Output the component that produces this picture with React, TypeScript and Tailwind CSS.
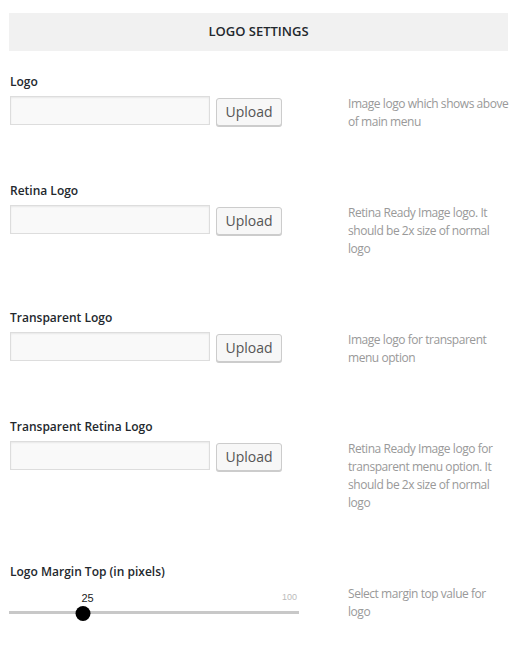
const font = { fontFamily: '"Open Sans", "Noto Sans", sans-serif' };

type Field = { label: string; desc: string[] };

const fields: Field[] = [
  { label: "Logo", desc: ["Image logo which shows above", "of main menu"] },
  {
    label: "Retina Logo",
    desc: ["Retina Ready Image logo. It", "should be 2x size of normal", "logo"],
  },
  {
    label: "Transparent Logo",
    desc: ["Image logo for transparent", "menu option"],
  },
  {
    label: "Transparent Retina Logo",
    desc: [
      "Retina Ready Image logo for",
      "transparent menu option. It",
      "should be 2x size of normal",
      "logo",
    ],
  },
];

function Description({ lines }: { lines: string[] }) {
  return (
    <div className="ml-[48px] text-[12px] leading-[18px] tracking-[-0.45px] text-[#999]">
      {lines.map((l) => (
        <div key={l} className="whitespace-nowrap">
          {l}
        </div>
      ))}
    </div>
  );
}

function UploadField({ field }: { field: Field }) {
  return (
    <div className="pb-[51px]">
      <div className="pl-[10px] text-[12px] font-semibold leading-[18px] text-[#23282d]">
        {field.label}
      </div>
      <div className="mt-[3px] flex items-start">
        <div className="flex w-[300px] shrink-0 items-start pl-[10px] pt-[2px]">
          <div className="h-[29px] w-[200px] border border-[#ddd] bg-[#f9f9f9] shadow-[inset_0_1px_2px_rgba(0,0,0,0.07)]" />
          <button className="ml-[6px] mt-[2px] h-[28px] w-[66px] rounded-[3px] border border-[#ccc] bg-[#f7f7f7] text-[14px] leading-[26px] text-[#555] shadow-[0_1px_0_#ccc]">
            Upload
          </button>
        </div>
        <div className="pt-[1px]">
          <Description lines={field.desc} />
        </div>
      </div>
    </div>
  );
}

function MarginSlider() {
  const value = 25;
  const max = 100;
  return (
    <div>
      <div className="pl-[10px] text-[12px] font-semibold leading-[18px] text-[#23282d]">
        Logo Margin Top (in pixels)
      </div>
      <div className="mt-[3px] flex items-start">
        <div className="w-[300px] shrink-0 pl-[9px] pt-[10px]">
          <div className="relative h-[30px] w-[290px]">
            <span
              className="absolute -top-[2px] -translate-x-1/2 text-[11px] leading-[12px] text-[#222]"
              style={{ left: `${(value / max) * 290 + 6}px`, fontFamily: '"Liberation Sans", Arial, sans-serif' }}
            >
              {value}
            </span>
            <span
              className="absolute right-[2px] -top-[2px] text-[9px] leading-[10px] text-[#bbb]"
              style={{ fontFamily: '"Liberation Sans", Arial, sans-serif' }}
            >
              {max}
            </span>
            <div className="absolute left-0 right-0 top-[17px] h-[3px] bg-[#c8c8c8]" />
            <div
              className="absolute top-[12px] h-[15px] w-[15px] -translate-x-1/2 rounded-full bg-black"
              style={{ left: `${(value / max) * 290 + 1}px` }}
            />
          </div>
        </div>
        <div className="pt-[1px]">
          <Description lines={["Select margin top value for", "logo"]} />
        </div>
      </div>
    </div>
  );
}

export default function App() {
  return (
    <div className="min-h-screen w-full bg-white" style={font}>
      <div className="px-[9px] pt-[13px]">
        <div className="flex h-[38px] w-[499px] items-center justify-center bg-[#f1f1f1] text-[13px] font-semibold text-[#23282d]">
          LOGO SETTINGS
        </div>
      </div>
      <div className="pt-[22px]">
        {fields.map((f) => (
          <UploadField key={f.label} field={f} />
        ))}
        <MarginSlider />
      </div>
    </div>
  );
}
